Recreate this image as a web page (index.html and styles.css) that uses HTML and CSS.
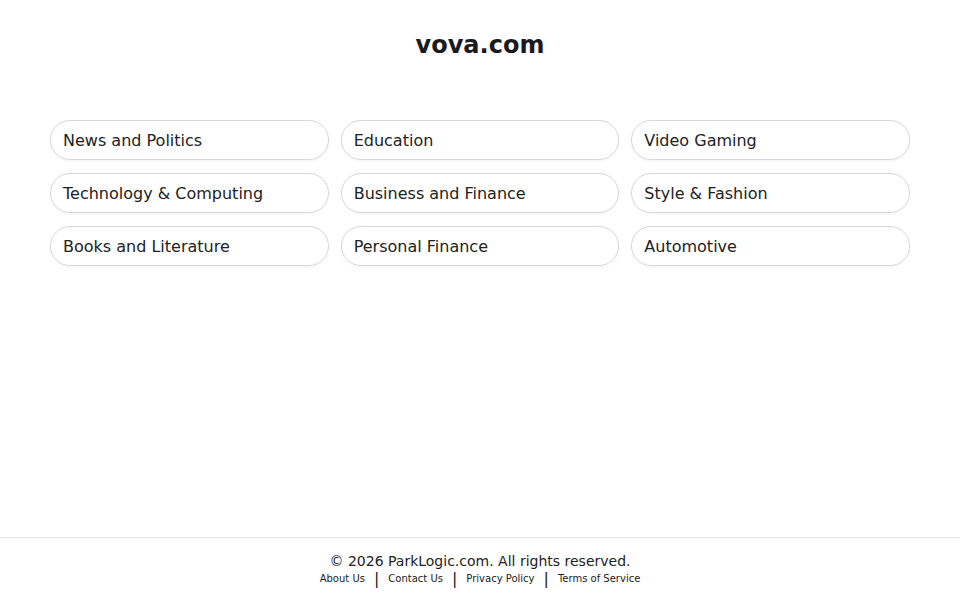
FILE: index.html
```html
<!DOCTYPE html>
<html>
<head>
<meta charset="utf-8">
<link rel="stylesheet" href="styles.css">
</head>
<body>
<div class="page">
  <main class="main">
    <h1 class="title">vova.com</h1>
    <div class="grid">
      <a class="pill">News and Politics</a>
      <a class="pill">Education</a>
      <a class="pill">Video Gaming</a>
      <a class="pill">Technology &amp; Computing</a>
      <a class="pill">Business and Finance</a>
      <a class="pill">Style &amp; Fashion</a>
      <a class="pill">Books and Literature</a>
      <a class="pill">Personal Finance</a>
      <a class="pill">Automotive</a>
    </div>
  </main>
  <footer class="footer">
    <div class="copy">© 2026 ParkLogic.com. All rights reserved.</div>
    <div class="links">
      <a class="link">About Us</a><span class="sep">|</span><a class="link">Contact Us</a><span class="sep">|</span><a class="link">Privacy Policy</a><span class="sep">|</span><a class="link">Terms of Service</a>
    </div>
  </footer>
</div>
</body>
</html>
```
FILE: styles.css
```css
html, body {
  margin: 0;
  padding: 0;
  background: #fff;
}
body {
  font-family: "DejaVu Sans", sans-serif;
  color: #222;
}
.page {
  min-height: 100vh;
  display: flex;
  flex-direction: column;
}
.main {
  padding: 0 50px;
}
.title {
  margin: 30px 0 0;
  font-size: 24px;
  line-height: 30px;
  font-weight: bold;
  text-align: center;
  color: #1a1a1f;
}
.grid {
  margin-top: 60px;
  display: grid;
  grid-template-columns: repeat(3, 1fr);
  column-gap: 12px;
  row-gap: 13px;
}
.pill {
  display: flex;
  align-items: center;
  height: 40px;
  box-sizing: border-box;
  padding: 0 12px;
  border: 1px solid #d8d8d8;
  border-radius: 20px;
  font-size: 16px;
  color: #222;
  box-shadow: 0 1px 3px rgba(0,0,0,0.05);
}
.footer {
  margin-top: auto;
  border-top: 1px solid #e6e6e6;
  padding: 15px 0 13px;
  text-align: center;
}
.copy {
  font-size: 14px;
  line-height: 17px;
  color: #222;
}
.links {
  margin-top: 1px;
  font-size: 10px;
  line-height: 16px;
  display: flex;
  justify-content: center;
  align-items: center;
}
.link {
  color: #222;
}
.sep {
  font-size: 16px;
  line-height: 16px;
  color: #222;
  margin: 0 9px;
}
```
